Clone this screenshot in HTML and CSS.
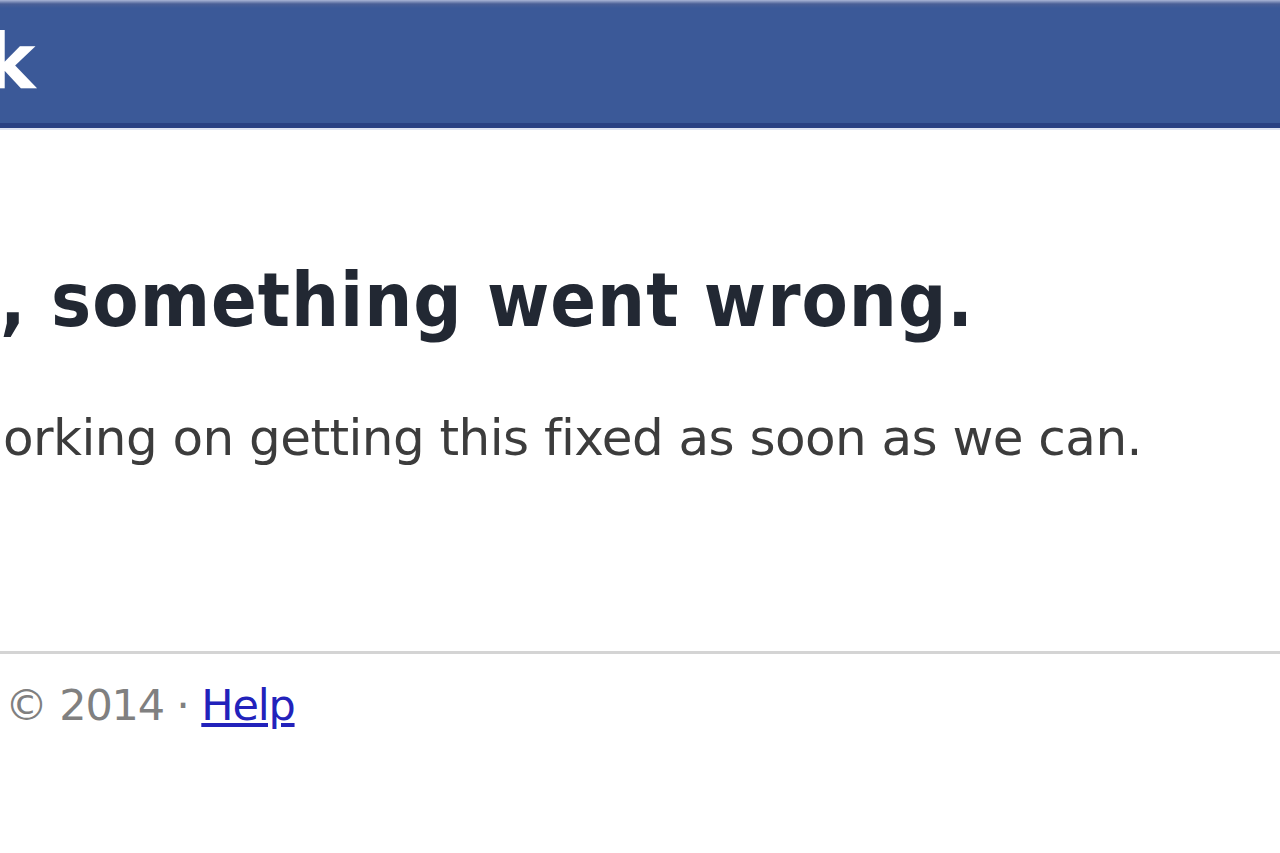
FILE: index.html
```html
<!DOCTYPE html>
<html lang="en">
<head>
    <meta charset="UTF-8">
    <meta name="viewport" content="width=device-width, initial-scale=1.0">
    <title>Error</title>
    <link rel="stylesheet" href="styles.css">
</head>
<body>
    <header class="topbar">
        <div class="logo">k</div>
    </header>
    <main class="content">
        <h1>, something went wrong.</h1>
        <p>orking on getting this fixed as soon as we can.</p>
    </main>
    <footer class="footer">
        <span class="copy">&copy; 2014 &middot; </span><a href="#">Help</a>
    </footer>
</body>
</html>
```

FILE: styles.css
```css
:root {
    --fb-blue: #3b5998;
    --fb-dark: #2a4183;
    --text-color: #333333;
    --muted: #808080;
    --link: #2222bb;
}

body {
    margin: 0;
    font-family: "DejaVu Sans", Tahoma, sans-serif;
    background-color: #ffffff;
    color: var(--text-color);
    overflow: hidden;
}

.topbar {
    height: 123px;
    background: linear-gradient(#aab5d6 0, #4a5f96 4px, var(--fb-blue) 8px);
    border-bottom: 5px solid var(--fb-dark);
    box-shadow: 0 2px 0 #dfe4f2;
}

.logo {
    color: #ffffff;
    font-weight: bold;
    font-size: 76px;
    line-height: 124px;
    margin-left: -15px;
}

.content {
    padding-top: 127px;
}

h1 {
    margin: 0;
    font-family: "DejaVu Sans Condensed", "DejaVu Sans", sans-serif;
    font-stretch: condensed;
    font-size: 75px;
    line-height: 90px;
    letter-spacing: 1px;
    font-weight: bold;
    color: #222833;
}

p {
    margin: 63px 0 0 3px;
    font-size: 50px;
    line-height: 60px;
    letter-spacing: -0.55px;
    color: #3c3c3c;
}

.footer {
    margin-top: 183px;
    border-top: 3px solid #d4d4d4;
    padding: 25px 0 0 5px;
    font-size: 43px;
    line-height: 52px;
    letter-spacing: -1.2px;
    color: var(--muted);
}

.footer a {
    color: var(--link);
}
```
